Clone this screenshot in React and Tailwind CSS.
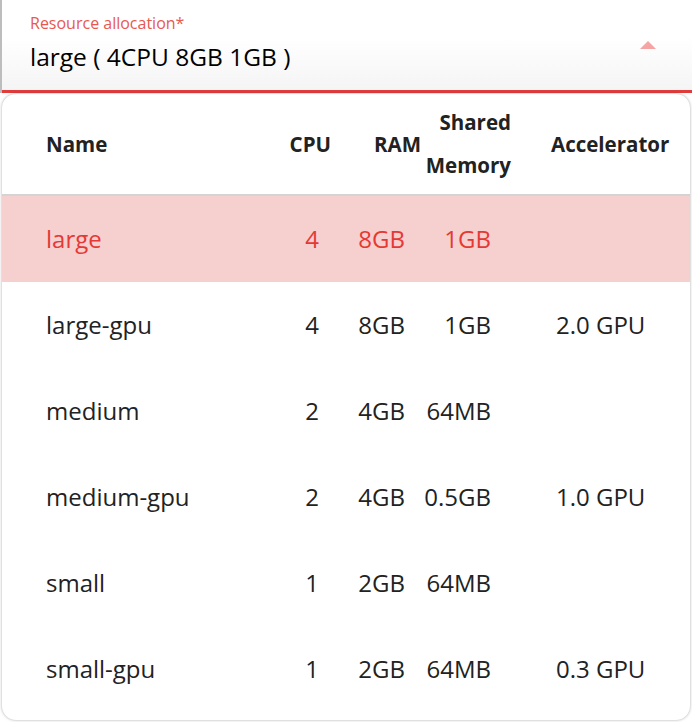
const rows = [
  { name: 'large', cpu: '4', ram: '8GB', shm: '1GB', acc: '' },
  { name: 'large-gpu', cpu: '4', ram: '8GB', shm: '1GB', acc: '2.0 GPU' },
  { name: 'medium', cpu: '2', ram: '4GB', shm: '64MB', acc: '' },
  { name: 'medium-gpu', cpu: '2', ram: '4GB', shm: '0.5GB', acc: '1.0 GPU' },
  { name: 'small', cpu: '1', ram: '2GB', shm: '64MB', acc: '' },
  { name: 'small-gpu', cpu: '1', ram: '2GB', shm: '64MB', acc: '0.3 GPU' },
];

export default function App() {
  const selected = 'large';

  return (
    <div className="relative w-[692px] h-[722px] overflow-hidden bg-white font-['Open_Sans',sans-serif] text-[#212121]">
      {/* select field */}
      <div className="h-[93px] border-l-2 border-[#bdbdbd] bg-gradient-to-b from-white from-40% to-[#f4f4f4] px-[28px] relative">
        <div className="pt-[11px] text-[16px] leading-[24px] text-[#e8584f]">Resource allocation*</div>
        <div className="mt-[6px] text-[24.5px] leading-[32px] text-black">large ( 4CPU 8GB 1GB )</div>
        <div className="absolute right-[36px] top-[41px] w-0 h-0 border-l-[8px] border-r-[8px] border-b-[8px] border-l-transparent border-r-transparent border-b-[#f6a3a3]" />
        <div className="absolute left-0 right-0 bottom-0 h-[3px] bg-[#e03c3c]" />
      </div>

      {/* dropdown panel */}
      <div className="absolute left-[2px] right-[2px] top-[94px] bottom-[2px] bg-white rounded-[14px] shadow-[0_0_3px_rgba(0,0,0,0.35)] overflow-hidden">
        <div className="flex items-center h-[102px] border-b-2 border-[#d4d4d4] font-bold text-[20.5px] text-[#222]">
          <div className="w-[238px] pl-[44px]">Name</div>
          <div className="w-[91px] text-right">CPU</div>
          <div className="w-[90px] text-right">RAM</div>
          <div className="w-[90px] text-right leading-[43px]">
            <div>Shared</div>
            <div>Memory</div>
          </div>
          <div className="flex-1 pl-[40px]">Accelerator</div>
        </div>
        {rows.map((r) => (
          <div
            key={r.name}
            className={
              'flex items-center h-[86px] text-[24px] ' +
              (r.name === selected ? 'bg-[#f6cfcf] text-[#e53935]' : 'text-[#222]')
            }
          >
            <div className="w-[238px] pl-[44px]">{r.name}</div>
            <div className="w-[91px] text-right pr-[12px]">{r.cpu}</div>
            <div className="w-[90px] text-right pr-[16px]">{r.ram}</div>
            <div className="w-[90px] text-right pr-[20px]">{r.shm}</div>
            <div className="flex-1 pl-[45px]">{r.acc}</div>
          </div>
        ))}
      </div>
    </div>
  );
}
